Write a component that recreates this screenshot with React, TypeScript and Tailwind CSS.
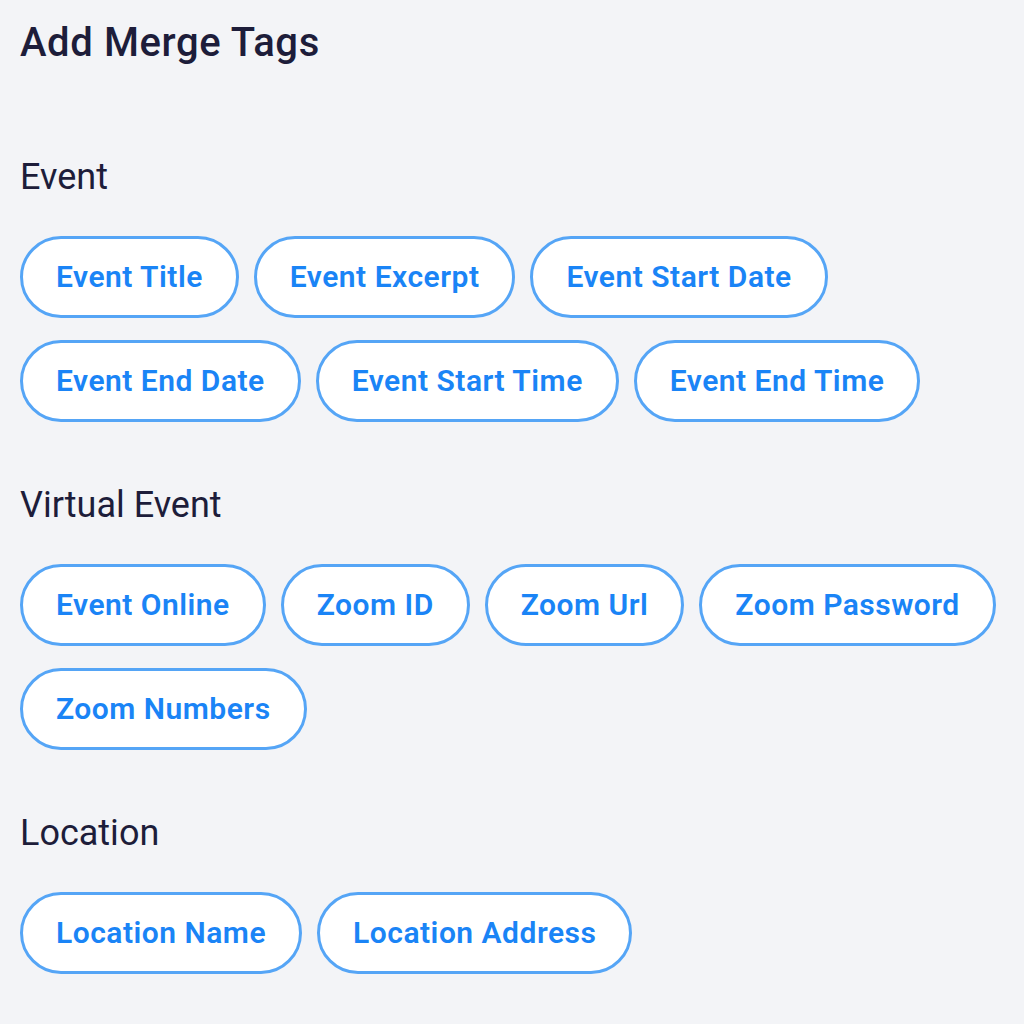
import React from "react";

const sections: { title: string; tags: string[] }[] = [
  {
    title: "Event",
    tags: ["Event Title", "Event Excerpt", "Event Start Date", "Event End Date", "Event Start Time", "Event End Time"],
  },
  {
    title: "Virtual Event",
    tags: ["Event Online", "Zoom ID", "Zoom Url", "Zoom Password", "Zoom Numbers"],
  },
  {
    title: "Location",
    tags: ["Location Name", "Location Address"],
  },
];

function Tag({ label }: { label: string }) {
  return (
    <button className="h-[82px] px-[33px] rounded-full border-[3px] border-[#55a5f6] bg-white text-[#1a84f6] text-[30px] font-semibold tracking-[0.5px] leading-none">
      {label}
    </button>
  );
}

export default function App() {
  return (
    <div className="min-h-screen w-full bg-[#f3f4f7] pl-[20px] pt-[19px] font-['Roboto',_'Liberation_Sans',_sans-serif]">
      <h1 className="h-[48px] leading-[48px] text-[40px] font-medium text-[#1d1d3a] tracking-[0.6px]">Add Merge Tags</h1>
      <div className="mt-[90px] flex flex-col gap-[63px]">
        {sections.map((s) => (
          <div key={s.title}>
            <div className="h-[40px] leading-[40px] text-[36px] text-[#1d1d3a]">{s.title}</div>
            <div className="mt-[39px] flex flex-wrap gap-x-[15px] gap-y-[22px] pr-[20px]">
              {s.tags.map((t) => (
                <Tag key={t} label={t} />
              ))}
            </div>
          </div>
        ))}
      </div>
    </div>
  );
}
